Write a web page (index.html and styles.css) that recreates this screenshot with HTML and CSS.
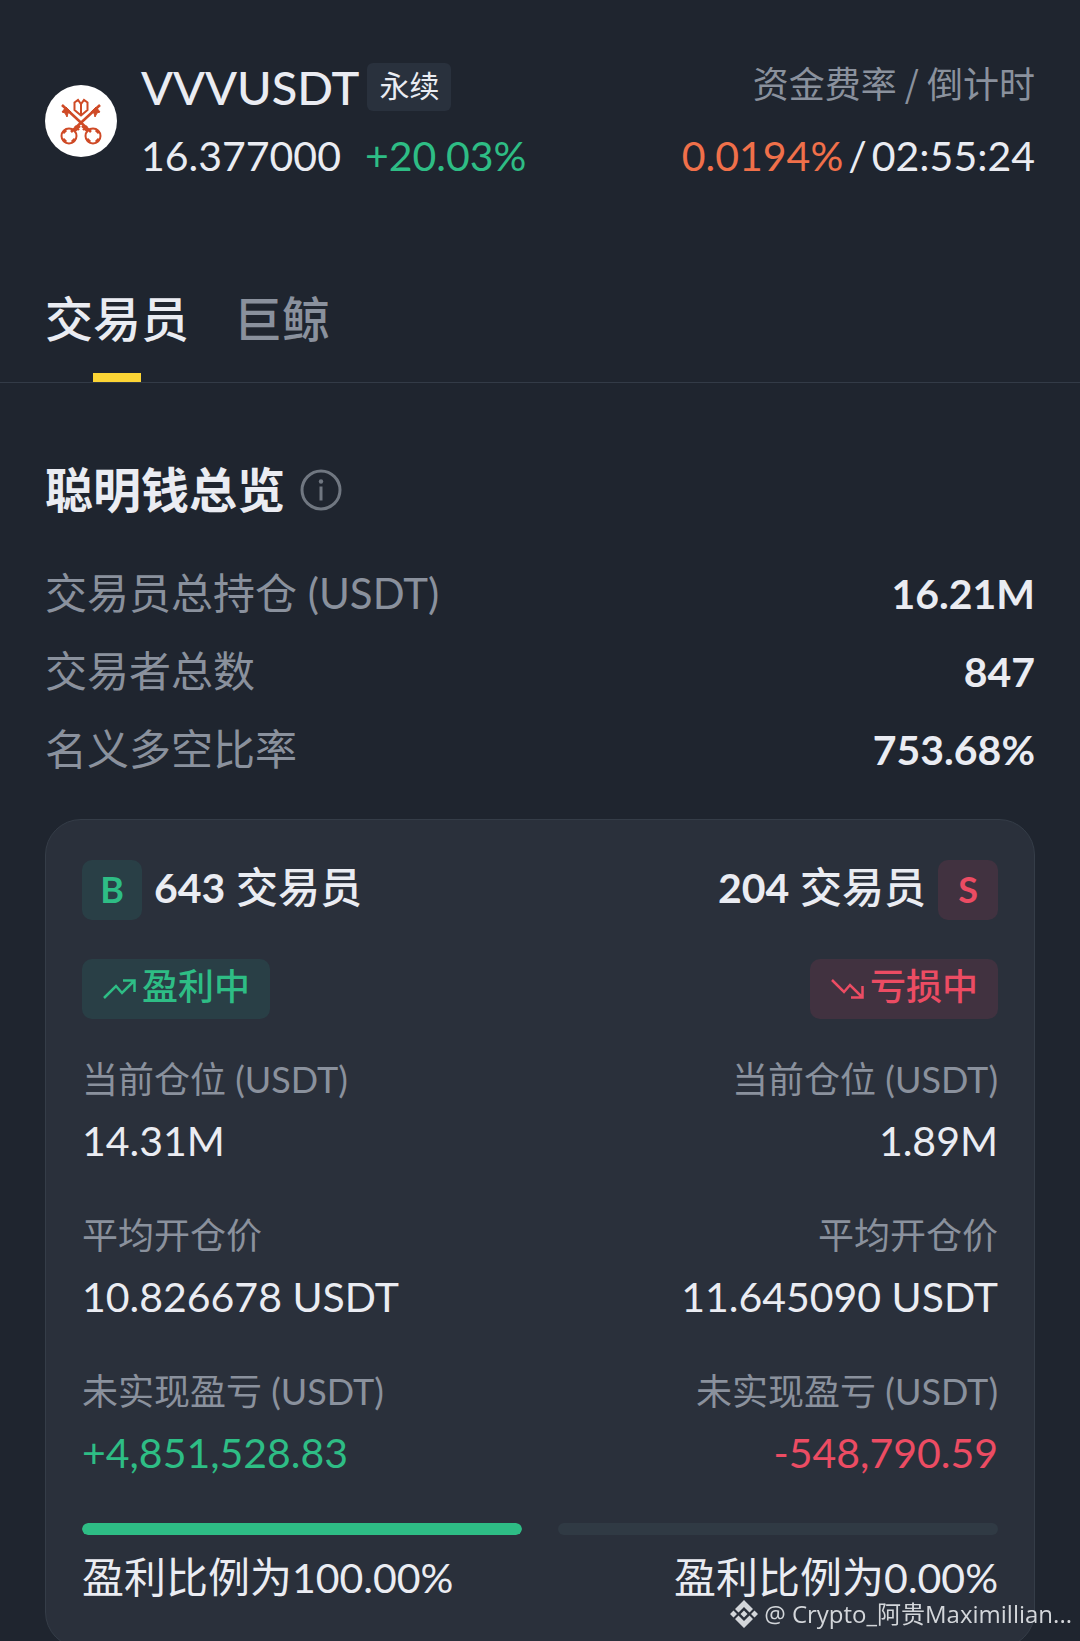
FILE: index.html
```html
<!DOCTYPE html>
<html lang="zh-CN">
<head>
<meta charset="utf-8">
<meta name="viewport" content="width=device-width, initial-scale=1">
<title>VVVUSDT 聪明钱总览</title>
<link rel="stylesheet" href="styles.css">
</head>
<body>
<div class="screen">
  <header class="header">
    <svg class="logo" viewBox="0 0 72 72" aria-hidden="true">
      <circle cx="36" cy="36" r="36" fill="#fff"/>
      <g fill="none" stroke="#cf4a26" stroke-width="2">
        <path d="M17 20 46 47M55 20 26 47" stroke-width="2.6"/>
        <path d="M30 46l5-5M42 46l-5-5M30 41l4 4M42 41l-4 4" stroke-width="2.4"/>
        <path d="M17 27l4-5 5 5-3 1-1 4-2-4zM55 27l-4-5-5 5 3 1 1 4 2-4z" fill="#cf4a26" stroke-width="1"/>
        <path d="M29.500 17.500 33 15l3 4 3-4 3.500 2.500V25L36 30.500 29.500 25zM36 19v11"/>
        <circle cx="24" cy="51" r="7.500"/>
        <circle cx="48" cy="51" r="7.500"/>
        <path d="M18 48l3-3M27 57l3-3M18 54l3 3M54 48l-3-3M45 57l-3-3M54 54l-3 3" stroke-width="3"/>
      </g>
    </svg>
    <div class="pair">
      <h1 class="pair-name">VVVUSDT <span class="chip">永续</span></h1>
      <p class="quote"><span>16.377000</span><span class="up">+20.03%</span></p>
    </div>
    <div class="funding">
      <p class="funding-label">资金费率 / 倒计时</p>
      <p class="quote funding-value"><span class="rate">0.0194%</span><span>/</span><span>02:55:24</span></p>
    </div>
  </header>

  <nav class="tabs" aria-label="类别">
    <button class="tab tab-active" type="button">交易员</button>
    <button class="tab" type="button">巨鲸</button>
  </nav>

  <main class="content">
    <div class="section-head">
      <h2 class="section-title">聪明钱总览</h2>
      <button class="info" type="button" aria-label="说明">
        <svg viewBox="0 0 42 42" aria-hidden="true">
          <circle cx="21" cy="21" r="19" fill="none" stroke="currentColor" stroke-width="3"/>
          <circle cx="21" cy="12.500" r="2.200" fill="currentColor"/>
          <path d="M21 17.500v14" stroke="currentColor" stroke-width="3"/>
        </svg>
      </button>
    </div>

    <dl class="summary">
      <div class="summary-row"><dt>交易员总持仓 (USDT)</dt><dd>16.21M</dd></div>
      <div class="summary-row"><dt>交易者总数</dt><dd>847</dd></div>
      <div class="summary-row"><dt>名义多空比率</dt><dd>753.68%</dd></div>
    </dl>

    <section class="card">
      <div class="side side-long">
        <div class="side-head"><span class="badge">B</span><h3 class="count"><span class="latin">643</span> 交易员</h3></div>
        <p class="tag">
          <svg viewBox="0 0 36 24" aria-hidden="true"><path d="M2 21 14 9l6 7L32 4M21 3.500h11.500V15" fill="none" stroke="currentColor" stroke-width="2.500"/></svg><span>盈利中</span>
        </p>
        <dl class="stats">
          <div><dt>当前仓位 (USDT)</dt><dd>14.31M</dd></div>
          <div><dt>平均开仓价</dt><dd>10.826678 USDT</dd></div>
          <div><dt>未实现盈亏 (USDT)</dt><dd class="up">+4,851,528.83</dd></div>
        </dl>
        <div class="bar"><div class="bar-fill" style="width:100%"></div></div>
        <p class="ratio">盈利比例为<span class="latin">100.00%</span></p>
      </div>
      <div class="side side-short">
        <div class="side-head"><h3 class="count"><span class="latin">204</span> 交易员</h3><span class="badge">S</span></div>
        <p class="tag">
          <svg viewBox="0 0 36 24" aria-hidden="true"><path d="M2 3 14 15l6-7 12 12M21 20.500h11.500V9" fill="none" stroke="currentColor" stroke-width="2.500"/></svg><span>亏损中</span>
        </p>
        <dl class="stats">
          <div><dt>当前仓位 (USDT)</dt><dd>1.89M</dd></div>
          <div><dt>平均开仓价</dt><dd>11.645090 USDT</dd></div>
          <div><dt>未实现盈亏 (USDT)</dt><dd class="down">-548,790.59</dd></div>
        </dl>
        <div class="bar"><div class="bar-fill" style="width:0%"></div></div>
        <p class="ratio">盈利比例为<span class="latin">0.00%</span></p>
      </div>
    </section>
  </main>
</div>

<p class="watermark">
  <svg viewBox="0 0 28 28" aria-hidden="true"><path d="M14 0l9 9-3.500 3.500L14 7l-5.500 5.500L5 9zM14 28l9-9-3.500-3.500L14 21l-5.500-5.500L5 19zM14 10.500l3.500 3.500-3.500 3.500-3.500-3.500zM3.500 10.500 7 14l-3.500 3.500L0 14zM24.500 10.500 28 14l-3.500 3.500L21 14z" fill="currentColor"/></svg>
  <span>@ Crypto_阿贵Maximillian...</span>
</p>
</body>
</html>
```

FILE: styles.css
```css
* { box-sizing: border-box; }

body, h1, h2, h3, p, dl, dd { margin: 0; }

body {
  background: #1f252f;
  color: #eaecf2;
  font-family: Lato, "Noto Sans CJK SC", sans-serif;
  font-size: 42px;
  line-height: 60px;
}

button {
  padding: 0;
  border: 0;
  background: none;
  color: inherit;
  font: inherit;
}

.screen {
  height: 100vh;
  overflow-y: auto;
  scrollbar-width: none;
}

.latin { font-size: 41px; }
.up { color: #2ebd85; }
.down { color: #ec4c63; }

.header {
  display: flex;
  align-items: center;
  padding: 56px 45px 0;
}

.logo {
  width: 72px;
  height: 72px;
  margin-right: 24px;
}

.pair-name {
  display: flex;
  align-items: center;
  gap: 8px;
  height: 62px;
  font-size: 47px;
  font-weight: 500;
}

.chip {
  padding: 0 12px 4px;
  border-radius: 6px;
  background: #29313d;
  font-size: 30px;
  font-weight: 400;
  line-height: 44px;
}

.quote {
  display: flex;
  gap: 24px;
  margin-top: 8px;
  font-size: 41px;
}

.funding {
  margin-left: auto;
  text-align: right;
}

.funding-label {
  padding-bottom: 10px;
  color: #8a919d;
  font-family: "Noto Sans CJK SC", sans-serif;
  font-size: 36px;
  line-height: 52px;
}

.funding-value {
  justify-content: flex-end;
  gap: 5px;
}

.rate { color: #f0704a; }

.tabs {
  display: flex;
  gap: 45px;
  margin-top: 97px;
  padding: 0 45px;
  border-bottom: 1px solid #333b47;
}

.tab {
  padding: 6px 0 24px;
  border-bottom: 9px solid transparent;
  color: #8a919d;
  font-size: 48px;
  font-weight: 500;
}

.tab-active {
  border-image: linear-gradient(90deg, transparent 48px, #fcd535 48px, #fcd535 96px, transparent 96px) 0 0 9;
  color: #eaecf2;
}

.content { padding: 77px 45px 45px; }

.section-head {
  display: flex;
  align-items: center;
  gap: 15px;
}

.section-title {
  font-size: 48px;
  font-weight: 700;
}

.info {
  width: 42px;
  height: 42px;
  color: #707781;
}

.info svg { display: block; }

.summary {
  display: grid;
  gap: 18px;
  margin-top: 44px;
}

.summary-row {
  display: flex;
  justify-content: space-between;
}

.summary dt {
  color: #8a919d;
  line-height: 58px;
}

.summary dd {
  font-size: 41px;
  font-weight: 700;
}

.card {
  display: grid;
  grid-template-columns: 1fr 1fr;
  gap: 36px;
  margin-top: 39px;
  padding: 39px 36px;
  border: 1px solid #353d48;
  border-radius: 36px;
  background: #2a303b;
}

.side-long { --tone: #2ebd85; --tint: #293f46; }
.side-short { --tone: #ec4c63; --tint: #413240; text-align: right; }

.side-head {
  display: flex;
  align-items: center;
  gap: 12px;
}

.side-short .side-head { justify-content: flex-end; }

.badge {
  width: 60px;
  padding-bottom: 2px;
  border-radius: 10px;
  background: var(--tint);
  color: var(--tone);
  font-size: 36px;
  font-weight: 700;
  line-height: 58px;
  text-align: center;
}

.count {
  padding-bottom: 4px;
  font-size: 42px;
  font-weight: 500;
  line-height: 56px;
}

.count .latin { font-weight: 700; }

.tag {
  display: inline-flex;
  align-items: center;
  gap: 4px;
  height: 60px;
  margin-top: 39px;
  padding: 0 20px;
  border-radius: 10px;
  background: var(--tint);
  color: var(--tone);
  font-size: 36px;
  font-weight: 500;
}

.tag svg { width: 36px; height: 24px; }
.tag span { padding-bottom: 6px; line-height: 54px; }

.stats {
  display: grid;
  gap: 34px;
  margin-top: 30px;
}

.stats dt {
  color: #8a919d;
  font-size: 36px;
}

.stats dd {
  margin-top: 2px;
  font-size: 41px;
}

.bar {
  height: 12px;
  margin-top: 40px;
  overflow: hidden;
  border-radius: 6px;
  background: #303a44;
}

.bar-fill {
  height: 100%;
  border-radius: 6px;
  background: #2ebd85;
}

.ratio { margin-top: 12px; }

.watermark {
  position: fixed;
  right: 8px;
  bottom: 12px;
  display: flex;
  align-items: center;
  gap: 6px;
  color: #d3d6da;
  font-family: "Open Sans", "Noto Sans CJK SC", sans-serif;
  font-size: 24px;
  line-height: 30px;
}

.watermark svg { width: 28px; height: 28px; }
```
